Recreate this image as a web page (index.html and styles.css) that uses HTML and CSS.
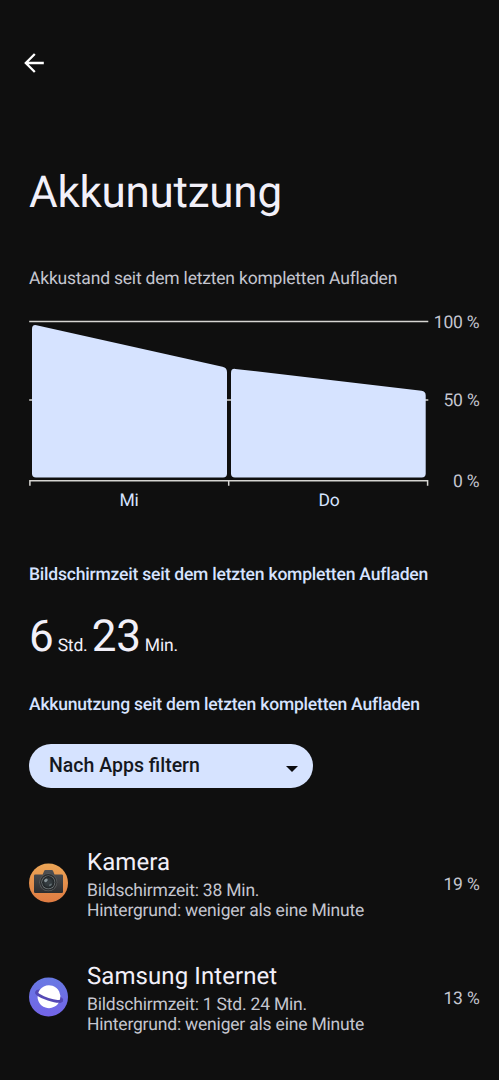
FILE: index.html
```
<!DOCTYPE html>
<html lang="de">
<head>
  <meta charset="UTF-8">
  <meta name="viewport" content="width=device-width, initial-scale=1.0">
  <title>Akkunutzung</title>
  <link rel="stylesheet" href="styles.css">
</head>
<body>
  <header class="toolbar">
    <button class="back-button" aria-label="Zurück">
      <svg width="24" height="24" viewBox="0 0 24 24" fill="none" stroke="#fff" stroke-width="2.3">
        <path d="M21.8 12H4M12.8 3L3.8 12l9 9"/>
      </svg>
    </button>
  </header>

  <main class="content">
    <h1 class="page-title">Akkunutzung</h1>

    <p class="chart-caption">Akkustand seit dem letzten kompletten Aufladen</p>
    <div class="chart">
      <div class="chart-plot">
        <svg class="chart-svg" width="400" height="176" viewBox="29 312 400 176">
          <g fill="none" stroke="#d6d5d2" stroke-width="1.5">
            <path d="M29.2 321.5H428.3"/>
            <path d="M29.2 400H428.3"/>
            <path d="M29.9 485.8V480.7H427.6V485.8M228.7 480.7V485.8"/>
          </g>
          <g fill="#d6e3ff">
            <path d="M32 329Q32 324.3 36.5 325.2L222.5 366.7Q227 367.8 227 372V473.5Q227 477.6 223 477.6H36Q32 477.6 32 473.5Z"/>
            <path d="M231 373Q231 368.4 235.3 368.9L421.5 390.8Q425.7 391.4 425.7 395.5V473.5Q425.7 477.6 421.7 477.6H235Q231 477.6 231 473.5Z"/>
          </g>
        </svg>
        <div class="chart-days">
          <span>Mi</span>
          <span>Do</span>
        </div>
      </div>
      <div class="chart-scale">
        <span>100 %</span>
        <span>50 %</span>
        <span>0 %</span>
      </div>
    </div>

    <h2 class="section-title">Bildschirmzeit seit dem letzten kompletten Aufladen</h2>
    <p class="screen-time"><span class="number">6</span> Std. <span class="number">23</span> Min.</p>

    <h2 class="section-title">Akkunutzung seit dem letzten kompletten Aufladen</h2>
    <button class="filter">
      <span>Nach Apps filtern</span>
      <svg class="filter-arrow" width="12" height="6" viewBox="0 0 12 6"><path d="M0 0h12L6 6z" fill="#0b0c10"/></svg>
    </button>

    <ul class="app-list">
      <li class="app">
        <svg class="app-icon" width="40" height="40" viewBox="0 0 40 40">
          <defs>
            <linearGradient id="orange" x1="0" y1="0" x2="0" y2="1">
              <stop offset="0" stop-color="#eba556"/>
              <stop offset="1" stop-color="#df7b42"/>
            </linearGradient>
            <linearGradient id="camera-body" x1="0" y1="0" x2="0" y2="1">
              <stop offset="0" stop-color="#505154"/>
              <stop offset="1" stop-color="#2c2d2f"/>
            </linearGradient>
            <radialGradient id="lens">
              <stop offset="0" stop-color="#3a4145"/>
              <stop offset="0.6" stop-color="#30373b"/>
              <stop offset="1" stop-color="#1c2022"/>
            </radialGradient>
          </defs>
          <circle cx="19.5" cy="20" r="19.5" fill="url(#orange)"/>
          <path d="M6.2 11.4h7.5l1.4-3.5q.4-.9 1.3-.9h6.4q.9 0 1.3.9l1.4 3.5h7.3q1.2 0 1.2 1.2v16.2q0 1.2-1.2 1.2H6.2Q5 30 5 28.8V12.6q0-1.2 1.2-1.2z" fill="url(#camera-body)"/>
          <circle cx="19.3" cy="19.3" r="9" fill="#595c5d"/>
          <circle cx="19.3" cy="19.3" r="8.3" fill="#2b2d2f"/>
          <circle cx="19.3" cy="19.3" r="6.9" fill="#747b7e"/>
          <circle cx="19.3" cy="19.3" r="6.2" fill="url(#lens)"/>
          <ellipse cx="16.9" cy="17.3" rx="2" ry="1.5" fill="#879398" transform="rotate(-40 16.9 17.3)"/>
          <ellipse cx="21.5" cy="21.8" rx="1.7" ry="1" fill="#606c70" transform="rotate(-40 21.5 21.8)"/>
        </svg>
        <div class="app-text">
          <div class="app-name">Kamera</div>
          <div>Bildschirmzeit: 38 Min.</div>
          <div>Hintergrund: weniger als eine Minute</div>
        </div>
        <div class="app-percent">19 %</div>
      </li>
      <li class="app">
        <svg class="app-icon" width="40" height="40" viewBox="0 0 40 40">
          <defs>
            <linearGradient id="violet" x1="0" y1="0" x2="0" y2="1">
              <stop offset="0" stop-color="#6879e3"/>
              <stop offset="1" stop-color="#7364e7"/>
            </linearGradient>
          </defs>
          <circle cx="19.5" cy="20" r="19.5" fill="url(#violet)"/>
          <g transform="rotate(18 20 19.7)" fill="none" stroke="#5549b5" stroke-width="2.7">
            <ellipse cx="20" cy="19.2" rx="13.2" ry="3.2"/>
            <circle cx="20" cy="19.7" r="11.4" fill="#fff" stroke="none"/>
            <path d="M6.8 19.2A13.2 3.2 0 0 0 33.2 19.2"/>
          </g>
        </svg>
        <div class="app-text">
          <div class="app-name">Samsung Internet</div>
          <div>Bildschirmzeit: 1 Std. 24 Min.</div>
          <div>Hintergrund: weniger als eine Minute</div>
        </div>
        <div class="app-percent">13 %</div>
      </li>
    </ul>
  </main>
</body>
</html>
```
FILE: styles.css
```
* {
  margin: 0;
  padding: 0;
  box-sizing: border-box;
}

body {
  background-color: #0f0f0f;
  color: #c5c6d0;
  font-family: Roboto, sans-serif;
  font-size: 17.5px;
  letter-spacing: -0.2px;
  line-height: 20px;
  text-rendering: geometricPrecision;
  height: 100vh;
  overflow: hidden;
}

button {
  border: none;
  background: none;
  font: inherit;
  cursor: pointer;
}

.toolbar {
  height: 166px;
  padding: 51px 0 0 22px;
}

.back-button {
  display: block;
  width: 24px;
  height: 24px;
}

.content {
  padding: 0 19.5px 0 29px;
}

.page-title {
  font-size: 44px;
  font-weight: 400;
  line-height: 52px;
  letter-spacing: -0.25px;
  color: #f2f0f9;
}

.chart-caption {
  margin-top: 51px;
}

.chart {
  display: flex;
  justify-content: space-between;
  margin-top: 23px;
  height: 200px;
}

.chart-plot {
  width: 400px;
}

.chart-svg {
  display: block;
}

.chart-days {
  display: flex;
  margin-top: 3px;
  color: #d6e3ff;
}

.chart-days span {
  flex: 1;
  text-align: center;
}

.chart-scale {
  display: flex;
  flex-direction: column;
  justify-content: space-between;
  height: 180px;
  padding-top: 1px;
  text-align: right;
  white-space: nowrap;
}

.chart-scale span:nth-child(2) {
  margin-bottom: 3px;
}

.section-title {
  margin-top: 53px;
  font-size: 17.5px;
  font-weight: 500;
  color: #d6e3ff;
}

.screen-time {
  margin-top: 25px;
  line-height: 52px;
  color: #f2f0f9;
}

.screen-time .number {
  font-size: 44px;
}

.screen-time + .section-title {
  margin-top: 23px;
}

.filter {
  display: flex;
  align-items: center;
  justify-content: space-between;
  width: 284px;
  height: 43.5px;
  margin-top: 29px;
  padding: 1px 15px 0 20px;
  border-radius: 22px;
  background-color: #d6e3ff;
  color: #15181e;
  font-size: 19.5px;
  font-weight: 500;
}

.filter-arrow {
  margin-top: 6px;
}

.app-list {
  margin-top: 60.5px;
  list-style: none;
}

.app {
  display: flex;
  align-items: center;
  height: 73px;
  margin-bottom: 41.3px;
}

.app-icon {
  flex: none;
  margin-top: -3px;
}

.app-text {
  flex: 1;
  margin-left: 18px;
}

.app-name {
  margin-bottom: 5px;
  font-size: 24px;
  line-height: 28px;
  letter-spacing: 0.08px;
  color: #f2f0f9;
}
```
